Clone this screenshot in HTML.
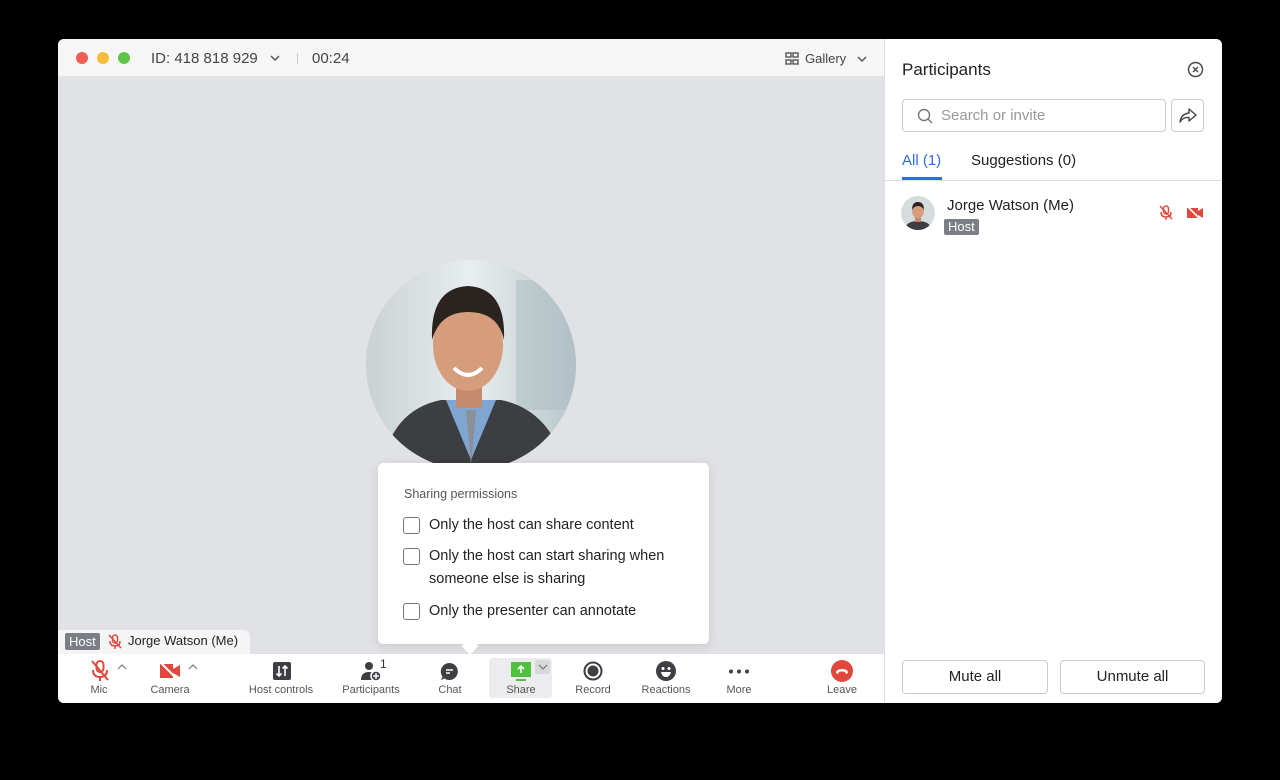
<!DOCTYPE html>
<html><head><meta charset="utf-8"><style>
*{box-sizing:border-box;margin:0;padding:0}
body{width:1280px;height:780px;background:#000;font-family:"Liberation Sans",sans-serif;position:relative;overflow:hidden;color:#222}
.win{position:absolute;left:58px;top:39px;width:1164px;height:664px;background:#fff;border-radius:6px;overflow:hidden}
.title{position:absolute;left:0;top:0;width:827px;height:38px;background:#f6f6f7;border-bottom:1px solid #e6e6e8}
.dot{position:absolute;top:13px;width:12px;height:12px;border-radius:50%}
.video{position:absolute;left:0;top:38px;width:827px;height:577px;background:#e1e2e5}
.tb{position:absolute;left:0;top:615px;width:827px;height:49px;background:#fff}
.side{position:absolute;left:826px;top:0;width:338px;height:664px;background:#fff;border-left:1px solid #dedfe2}
.lbl{position:absolute;top:30px;font-size:11px;color:#555;text-align:center;transform:translateX(-50%);white-space:nowrap}
.ic{position:absolute}
.pop{position:absolute;left:378px;top:463px;width:331px;height:181px;background:#fff;border-radius:5px;box-shadow:0 2px 10px rgba(0,0,0,.12)}
.cb{position:absolute;left:25px;width:17px;height:17px;border:1.5px solid #777;border-radius:3px;background:#fff}
.pt{position:absolute;left:51px;font-size:14.5px;color:#222;line-height:23px}
.btn{position:absolute;top:621px;height:34px;border:1px solid #c9cacd;border-radius:4px;font-size:15px;text-align:center;line-height:32px;color:#222;background:#fff}
</style></head><body>
<div class="win">
 <div class="title">
  <div class="dot" style="left:18px;background:#ee5f57"></div>
  <div class="dot" style="left:39px;background:#f6bd3b"></div>
  <div class="dot" style="left:60px;background:#5ec448"></div>
  <div style="position:absolute;left:93px;top:11px;font-size:15px;color:#444">ID: 418 818 929</div>
  <svg class="ic" style="left:212px;top:16px" width="10" height="7"><path d="M1 1l4 4 4-4" stroke="#555" stroke-width="1.5" fill="none"/></svg>
  <div style="position:absolute;left:239px;top:14px;width:1px;height:11px;background:#ccc"></div>
  <div style="position:absolute;left:254px;top:11px;font-size:15px;color:#444">00:24</div>
  <svg class="ic" style="left:727px;top:13px" width="14" height="13"><g fill="none" stroke="#555" stroke-width="1.4"><rect x="1" y="1" width="5" height="4"/><rect x="8" y="1" width="5" height="4"/><rect x="1" y="8" width="5" height="4"/><rect x="8" y="8" width="5" height="4"/></g></svg>
  <div style="position:absolute;left:747px;top:12px;font-size:13px;color:#444">Gallery</div>
  <svg class="ic" style="left:799px;top:17px" width="10" height="7"><path d="M1 1l4 4 4-4" stroke="#555" stroke-width="1.5" fill="none"/></svg>
 </div>
 <div class="video">
  <svg class="ic" style="left:308px;top:183px" width="210" height="210"><defs><clipPath id="c"><circle cx="105" cy="105" r="105"/></clipPath><linearGradient id="bg" x1="0" x2="1"><stop offset="0" stop-color="#c9d1d3"/><stop offset=".5" stop-color="#e9eeef"/><stop offset="1" stop-color="#b9c6c9"/></linearGradient></defs>
  <g clip-path="url(#c)"><rect width="210" height="210" fill="url(#bg)"/>
  <rect x="150" y="20" width="60" height="130" fill="#a9bcc2" opacity=".5"/>
  <path d="M15 210 Q25 150 75 140 L135 140 Q185 150 200 210Z" fill="#3c3e42"/>
  <path d="M80 140 L105 200 L130 140Z" fill="#7fa6d2"/>
  <path d="M100 150 L105 205 L110 150Z" fill="#8b8f96"/>
  <rect x="90" y="110" width="26" height="38" fill="#c48a6b"/>
  <ellipse cx="102" cy="85" rx="35" ry="46" fill="#d69d7d"/>
  <path d="M66 80 Q64 28 102 26 Q140 28 138 80 Q132 52 102 52 Q74 52 66 80Z" fill="#2b2320"/>
  <path d="M88 108 Q102 122 116 108" stroke="#fff" stroke-width="4" fill="none"/>
  </g></svg>
  <div style="position:absolute;left:0;top:553px;width:192px;height:24px;background:#f5f5f6;border-radius:0 6px 0 0"></div>
  <div style="position:absolute;left:7px;top:556px;padding:0 4px;height:17px;background:#7c7e85;color:#fff;font-size:13px;line-height:17px;border-radius:2px">Host</div>
  <svg class="ic" style="left:50px;top:557px" width="14" height="16"><g stroke="#e0483d" stroke-width="1.5" fill="none"><rect x="4.5" y="1" width="5" height="8" rx="2.5"/><path d="M2 7q0 5 5 5t5-5M7 12v3M1 1l12 13"/></g></svg>
  <div style="position:absolute;left:70px;top:556px;font-size:13px;color:#222">Jorge Watson (Me)</div>
 </div>
 <div class="tb">
  <svg class="ic" style="left:32px;top:6px" width="20" height="22"><g stroke="#e0483d" stroke-width="2" fill="none"><rect x="6.5" y="1" width="7" height="11" rx="3.5"/><path d="M3 10q0 7 7 7t7-7M10 17v4M2 1l16 19"/></g></svg>
  <svg class="ic" style="left:59px;top:10px" width="10" height="6"><path d="M1 5l4-4 4 4" stroke="#777" stroke-width="1.2" fill="none"/></svg>
  <div class="lbl" style="left:41px">Mic</div>
  <svg class="ic" style="left:101px;top:8px" width="22" height="18"><path d="M1 2h13v14H1zM14 7l7-4v12l-7-4z" fill="#e0483d"/><path d="M2 1l16 16" stroke="#fff" stroke-width="2"/></svg>
  <svg class="ic" style="left:130px;top:10px" width="10" height="6"><path d="M1 5l4-4 4 4" stroke="#777" stroke-width="1.2" fill="none"/></svg>
  <div class="lbl" style="left:112px">Camera</div>
  <svg class="ic" style="left:215px;top:8px" width="18" height="18"><rect width="18" height="18" rx="2" fill="#3d3f45"/><path d="M6 4v10M3.5 11.5L6 14l2.5-2.5M12 14V4M9.5 6.5L12 4l2.5 2.5" stroke="#fff" stroke-width="1.6" fill="none"/></svg>
  <div class="lbl" style="left:223px">Host controls</div>
  <svg class="ic" style="left:302px;top:6px" width="24" height="22"><circle cx="9" cy="6" r="4" fill="#3d3f45"/><path d="M1 20q0-8 8-8t7 3v5z" fill="#3d3f45"/><circle cx="16" cy="16" r="5" fill="#3d3f45" stroke="#fff" stroke-width="1.5"/><path d="M16 13v6M13 16h6" stroke="#fff" stroke-width="1.5"/></svg>
  <div style="position:absolute;left:322px;top:3px;font-size:12px;color:#333">1</div>
  <div class="lbl" style="left:313px">Participants</div>
  <svg class="ic" style="left:382px;top:8px" width="19" height="19"><path d="M9.5 1a8.5 8.5 0 1 1-7 13.5L1 18l3.5-1.5A8.5 8.5 0 0 1 9.5 1z" fill="#3d3f45"/><path d="M6 8h7M6 11h4" stroke="#fff" stroke-width="1.6"/></svg>
  <div class="lbl" style="left:392px">Chat</div>
  <div style="position:absolute;left:431px;top:4px;width:63px;height:40px;background:#ececee;border-radius:3px"></div>
  <div style="position:absolute;left:477px;top:6px;width:15px;height:14px;background:#d8d8db;border-radius:2px"></div>
  <svg class="ic" style="left:480px;top:10px" width="10" height="6"><path d="M1 1l4 4 4-4" stroke="#777" stroke-width="1.2" fill="none"/></svg>
  <svg class="ic" style="left:453px;top:8px" width="20" height="20"><rect width="20" height="15" fill="#4fc13e"/><path d="M10 4v7M7 7l3-3 3 3" stroke="#fff" stroke-width="1.6" fill="none"/><rect x="5" y="17" width="10" height="2" fill="#4fc13e"/></svg>
  <div class="lbl" style="left:463px">Share</div>
  <svg class="ic" style="left:525px;top:7px" width="20" height="20"><circle cx="10" cy="10" r="8.5" stroke="#3d3f45" stroke-width="2" fill="none"/><circle cx="10" cy="10" r="5.5" fill="#3d3f45"/></svg>
  <div class="lbl" style="left:535px">Record</div>
  <svg class="ic" style="left:598px;top:7px" width="20" height="20"><circle cx="10" cy="10" r="10" fill="#3d3f45"/><circle cx="7" cy="7.5" r="1.5" fill="#fff"/><circle cx="13" cy="7.5" r="1.5" fill="#fff"/><path d="M5 11h10q-1 5-5 5t-5-5z" fill="#fff"/></svg>
  <div class="lbl" style="left:608px">Reactions</div>
  <svg class="ic" style="left:670px;top:15px" width="22" height="5"><circle cx="3" cy="2.5" r="2" fill="#3d3f45"/><circle cx="11" cy="2.5" r="2" fill="#3d3f45"/><circle cx="19" cy="2.5" r="2" fill="#3d3f45"/></svg>
  <div class="lbl" style="left:681px">More</div>
  <svg class="ic" style="left:773px;top:6px" width="22" height="22"><circle cx="11" cy="11" r="11" fill="#e0483d"/><path d="M5 13q0-4 6-4t6 4l-2 1-1-2q-3-1-6 0l-1 2z" fill="#fff"/></svg>
  <div class="lbl" style="left:784px">Leave</div>
 </div>
 <div class="side">
  <div style="position:absolute;left:17px;top:21px;font-size:17px;color:#222">Participants</div>
  <svg class="ic" style="left:302px;top:22px" width="17" height="17"><circle cx="8.5" cy="8.5" r="7" stroke="#444" stroke-width="1.4" fill="none"/><path d="M6 6l5 5M11 6l-5 5" stroke="#444" stroke-width="1.4"/></svg>
  <div style="position:absolute;left:17px;top:60px;width:264px;height:33px;border:1px solid #c9cacd;border-radius:4px"></div>
  <svg class="ic" style="left:32px;top:69px" width="16" height="16"><circle cx="7" cy="7" r="5.5" stroke="#777" stroke-width="1.4" fill="none"/><path d="M11 11l4 4" stroke="#777" stroke-width="1.4"/></svg>
  <div style="position:absolute;left:56px;top:68px;font-size:15px;color:#999">Search or invite</div>
  <div style="position:absolute;left:286px;top:60px;width:33px;height:33px;border:1px solid #c9cacd;border-radius:4px"></div>
  <svg class="ic" style="left:294px;top:69px" width="18" height="15"><path d="M10 1l7 6-7 6V9.5Q4 9 1 14q1-8 9-9z" stroke="#444" stroke-width="1.4" fill="none" stroke-linejoin="round"/></svg>
  <div style="position:absolute;left:17px;top:113px;font-size:15px;color:#2e6be6">All (1)</div>
  <div style="position:absolute;left:86px;top:113px;font-size:15px;color:#222">Suggestions (0)</div>
  <div style="position:absolute;left:17px;top:138px;width:40px;height:3px;background:#2e6be6"></div>
  <div style="position:absolute;left:0;top:141px;width:338px;height:1px;background:#dedfe2"></div>
  <svg class="ic" style="left:16px;top:157px" width="34" height="34"><defs><clipPath id="c2"><circle cx="17" cy="17" r="17"/></clipPath></defs><g clip-path="url(#c2)"><rect width="34" height="34" fill="#d5dcde"/><path d="M3 34q2-9 14-9t14 9z" fill="#3c3e42"/><rect x="14" y="18" width="6" height="8" fill="#c48a6b"/><ellipse cx="17" cy="15" rx="6" ry="7.5" fill="#d69d7d"/><path d="M11 14q0-8 6-8t6 8q-2-4-6-4t-6 4z" fill="#2b2320"/></g></svg>
  <div style="position:absolute;left:62px;top:158px;font-size:15px;color:#222">Jorge Watson (Me)</div>
  <div style="position:absolute;left:59px;top:180px;padding:0 4px;height:16px;background:#7c7e85;color:#fff;font-size:13px;line-height:16px;border-radius:2px">Host</div>
  <svg class="ic" style="left:274px;top:166px" width="14" height="16"><g stroke="#e0483d" stroke-width="1.5" fill="none"><rect x="4.5" y="1" width="5" height="8" rx="2.5"/><path d="M2 7q0 5 5 5t5-5M7 12v3M1 1l12 13"/></g></svg>
  <svg class="ic" style="left:301px;top:167px" width="18" height="14"><path d="M1 2h11v10H1zM12 5l5-3v10l-5-3z" fill="#e0483d"/><path d="M2 1l12 12" stroke="#fff" stroke-width="1.6"/></svg>
 </div>
 <div class="btn" style="left:844px;width:146px">Mute all</div>
 <div class="btn" style="left:1002px;width:145px">Unmute all</div>
</div>
<div class="pop">
 <div style="position:absolute;left:26px;top:24px;font-size:12.5px;color:#555">Sharing permissions</div>
 <div class="cb" style="top:54px"></div><div class="pt" style="top:51px">Only the host can share content</div>
 <div class="cb" style="top:85px"></div><div class="pt" style="top:82px">Only the host can start sharing when<br>someone else is sharing</div>
 <div class="cb" style="top:140px"></div><div class="pt" style="top:137px">Only the presenter can annotate</div>
</div>
<div style="position:absolute;left:464px;top:640px;width:12px;height:12px;background:#fff;transform:rotate(45deg)"></div>
</body></html>
